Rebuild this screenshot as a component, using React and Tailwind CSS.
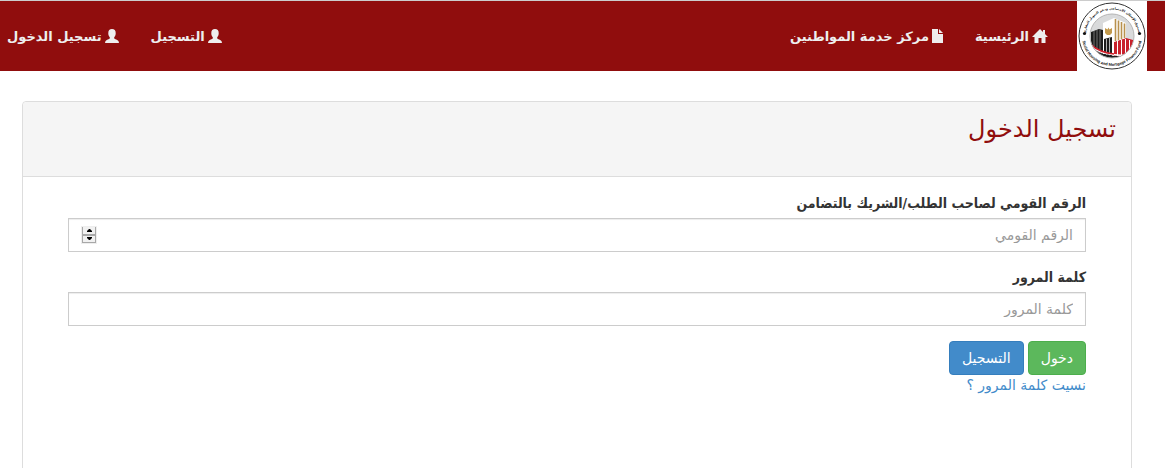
import React, { useState } from 'react';

const inputClass =
  "block w-full h-[34px] px-3 text-sm leading-5 text-right text-[#555555] bg-white border border-[#cccccc] placeholder:text-[#999999] shadow-[inset_0_1px_1px_rgba(0,0,0,0.075)] outline-none focus:border-[#66afe9] [appearance:textfield] [&::-webkit-inner-spin-button]:appearance-none";

const labelClass = "block mb-[5px] leading-5 font-bold font-['DejaVu_Sans_Condensed','DejaVu_Sans',sans-serif]";

const HomeIcon = () => (
  <svg width="16" height="14" viewBox="0 0 16 14" fill="currentColor" aria-hidden="true">
    <path d="M8 0 L11 3 V1 H13 V5 L16 8 H13.5 V14 H9.5 V9 H6.5 V14 H2.5 V8 H0 Z" />
  </svg>
);

const FileIcon = () => (
  <svg width="11" height="14" viewBox="0 0 11 14" fill="currentColor" aria-hidden="true">
    <path d="M0 0 H6 V5 H11 V14 H0 Z M7 0 L11 4 H7 Z" />
  </svg>
);

const UserIcon = () => (
  <svg width="14" height="14" viewBox="0 0 14 14" fill="currentColor" aria-hidden="true">
    <path d="M7 0 C9.4 0 10.8 1.5 10.7 4 C10.9 6 10 7.2 9.2 8.2 V9.4 C10.8 10.4 13 11 13.6 12.2 L14 14 H0 L0.4 12.2 C1 11 3.2 10.4 4.8 9.4 V8.2 C4 7.2 3.1 6 3.3 4 C3.2 1.5 4.6 0 7 0 Z" />
  </svg>
);

const Logo = () => (
  <svg width="70" height="70" viewBox="0 0 70 70" className="block bg-white" role="img" aria-label="Social Housing and Mortgage Finance Fund">
    <defs>
      <path id="ring-top" d="M15.2 52.8 A26.6 26.6 0 1 1 54.8 52.8" />
      <path id="ring-bottom" d="M5.8 28 A30 30 0 1 0 64.2 28" />
      <clipPath id="inner-disc">
        <circle cx="35" cy="35" r="22" />
      </clipPath>
    </defs>
    <circle cx="35" cy="35" r="33" fill="#ffffff" stroke="#333333" strokeWidth="1" />

    <g clipPath="url(#inner-disc)">
      <rect x="12" y="12" width="46" height="46" fill="#d9dadb" />
      {/* left building */}
      <path d="M14 31 L22 28 L26 29 V53 L14 48 Z" fill="#1c1c1c" />
      <path d="M17 30 V48 M20 29 V49 M23 28.5 V50" stroke="#8b8b8b" strokeWidth="0.8" />
      {/* right building */}
      <path d="M36 41 L49 37 L56 39 V56 H36 Z" fill="#c9202b" />
      <path d="M40.5 40 V55 M44.5 39 V55 M48.5 38 V55 M52.5 39 V55" stroke="#ffffff" strokeWidth="1" />
      {/* middle tower */}
      <path d="M26 22 L37 17 V56 L26 53 Z" fill="#ffffff" />
      <path d="M37 17 L49 22 V37 L37 41 Z" fill="#ffffff" />
      <path d="M38.5 18 V40 M41.5 19.5 V39 M44.5 21 V38 M47.5 22.5 V37" stroke="#b9924e" strokeWidth="1.6" />
      <path d="M28 27 L30.5 28.5 L31.5 26.5 L32.5 28.5 L35 27 V32 L33 34 H30 L28 32 Z" fill="#c39a4d" />
      <path d="M27 38 L35 36 V55 H27 Z" fill="#1c1c1c" />
      <path d="M29.5 38 V55 M32.5 37 V55" stroke="#d9d9d9" strokeWidth="0.8" />
      {/* road in front */}
      <path d="M12 45 C20 53 32 56 57 55 V58 H12 Z" fill="#1c1c1c" />
      <path d="M12 43.5 C21 52 31 54.5 57 54.5" fill="none" stroke="#ffffff" strokeWidth="1.6" />
      <path d="M12 42 C19 49 26 52 37 53" fill="none" stroke="#d3202c" strokeWidth="1.6" />
    </g>
    <circle cx="35" cy="35" r="22" fill="none" stroke="#b5b5b5" strokeWidth="1" />

    <circle cx="7.5" cy="32.5" r="1.6" fill="#111111" />
    <circle cx="62.5" cy="32.5" r="1.6" fill="#111111" />
    <text className="font-['DejaVu_Sans',sans-serif] font-bold" fontSize="3.2" fill="#111111" textAnchor="middle" direction="rtl">
      <textPath href="#ring-top" startOffset="50%">صندوق الإسكان الاجتماعي ودعم التمويل العقاري</textPath>
    </text>
    <text className="font-['Liberation_Sans',sans-serif] font-bold" fontSize="4" fill="#111111" textAnchor="middle" direction="ltr">
      <textPath href="#ring-bottom" startOffset="50%">Social Housing and Mortgage Finance Fund</textPath>
    </text>
  </svg>
);

const NavLink = ({ icon, children }) => (
  <a href="#" className="flex items-center gap-[3px] text-[13px] leading-5 font-bold text-[#eeeeee] hover:text-white whitespace-nowrap">
    {icon}
    <span className="pt-0.5">{children}</span>
  </a>
);

// up / down arrows at the end of the number field
const Spinner = ({ onStep }) => (
  <div className="absolute left-[13px] top-2 flex flex-col w-4 h-[18px] p-px bg-[#eeeeee]">
    <button type="button" aria-label="زيادة" onClick={() => onStep(1)} className="flex flex-1 items-center justify-center bg-[#f1f1f1] border border-t-0 border-[#a8a8a8]">
      <svg width="5" height="3" viewBox="0 0 5 3"><path d="M2 0 H3 L5 2 V3 H0 V2 Z" /></svg>
    </button>
    <button type="button" aria-label="نقصان" onClick={() => onStep(-1)} className="flex flex-1 items-center justify-center bg-[#f1f1f1] border border-[#a8a8a8]">
      <svg width="5" height="3" viewBox="0 0 5 3"><path d="M0 0 H5 V1 L3 3 H2 L0 1 Z" /></svg>
    </button>
  </div>
);

const App = () => {
  const [nationalId, setNationalId] = useState('');
  const [password, setPassword] = useState('');

  const handleStep = (step) => {
    setNationalId(String(Number(nationalId) + step));
  };

  return (
    <div dir="rtl" className="font-['DejaVu_Sans',sans-serif] text-sm leading-5 text-[#333333] bg-white">
      {/* Navbar */}
      <nav className="flex items-center justify-between bg-[#900d0d] border-t border-[#cccccc] ps-[18px] pe-[7px]">
        <div className="flex items-center">
          <a href="#" className="me-[29px]">
            <Logo />
          </a>
          <div className="flex gap-8">
            <NavLink icon={<HomeIcon />}>الرئيسية</NavLink>
            <NavLink icon={<FileIcon />}>مركز خدمة المواطنين</NavLink>
          </div>
        </div>
        <div className="flex gap-8">
          <NavLink icon={<UserIcon />}>التسجيل</NavLink>
          <NavLink icon={<UserIcon />}>تسجيل الدخول</NavLink>
        </div>
      </nav>

      {/* Login panel */}
      <main className="mt-[30px] ms-[33px] me-[22px] border border-[#dddddd] rounded">
        <div className="px-[15px] pt-3 pb-8 bg-[#f5f5f5] border-b border-[#dddddd] rounded-t">
          <h1 className="text-2xl leading-[30px] text-[#900d0d]">تسجيل الدخول</h1>
        </div>

        <form className="px-[45px] pt-4 pb-20" onSubmit={(e) => e.preventDefault()}>
          <div className="mb-[15px]">
            <label htmlFor="national-id" className={labelClass}>
              الرقم القومي لصاحب الطلب/الشريك بالتضامن
            </label>
            <div className="relative">
              <input
                id="national-id"
                type="number"
                value={nationalId}
                onChange={(e) => setNationalId(e.target.value)}
                placeholder="الرقم القومي"
                className={inputClass}
              />
              <Spinner onStep={handleStep} />
            </div>
          </div>

          <div className="mb-[15px]">
            <label htmlFor="password" className={labelClass}>
              كلمة المرور
            </label>
            <input
              id="password"
              type="password"
              value={password}
              onChange={(e) => setPassword(e.target.value)}
              placeholder="كلمة المرور"
              className={inputClass}
            />
          </div>

          <div className="flex gap-1">
            <button type="submit" className="h-[34px] px-3 text-white bg-[#5cb85c] border border-[#4cae4c] rounded hover:bg-[#449d44]">
              دخول
            </button>
            <button type="button" className="h-[34px] px-3 text-white bg-[#428bca] border border-[#357ebd] rounded hover:bg-[#3071a9]">
              التسجيل
            </button>
          </div>
          <a href="#" className="text-[#428bca] hover:underline">
            نسيت كلمة المرور ؟
          </a>
        </form>
      </main>
    </div>
  );
};

export default App;
